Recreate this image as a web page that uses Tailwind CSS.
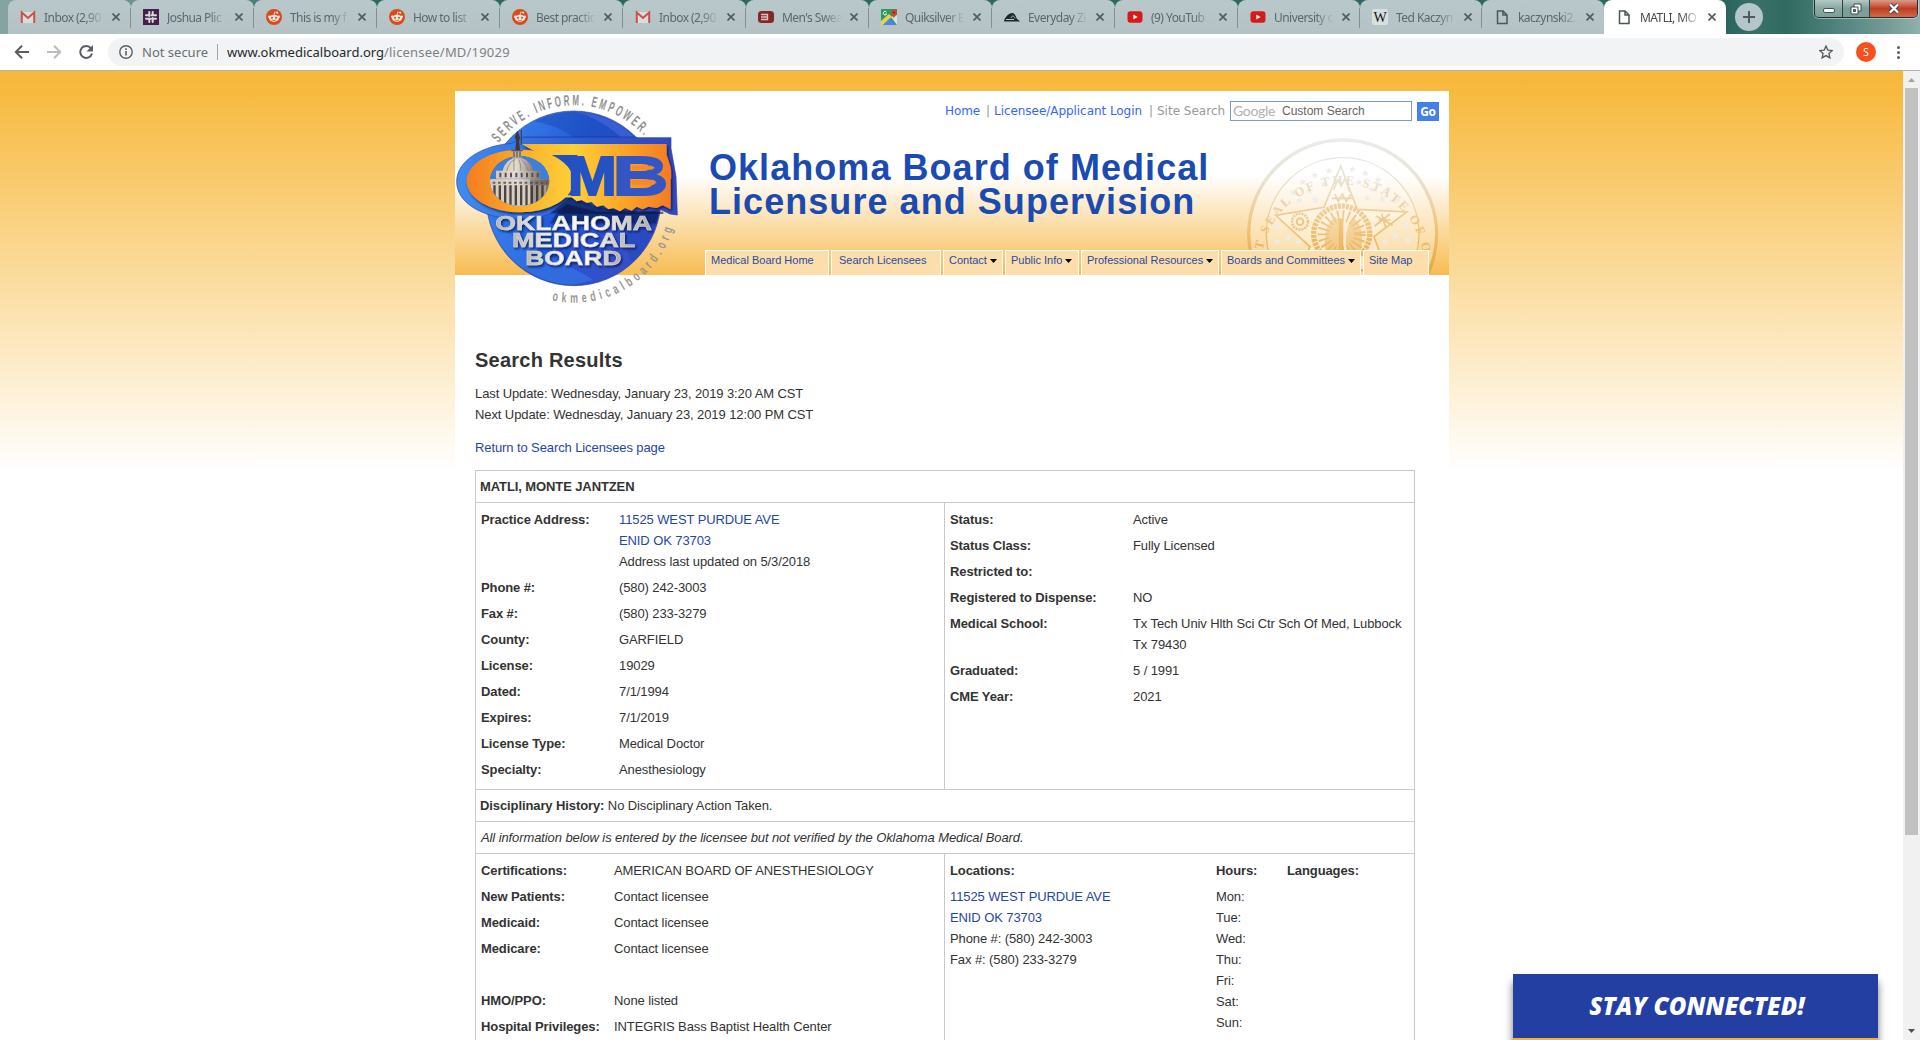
<!DOCTYPE html>
<html lang="en">
<head>
<meta charset="utf-8">
<title>MATLI, MONTE JANTZEN</title>
<script src="https://cdn.jsdelivr.net/npm/@tailwindcss/browser@4"></script>
</head>
<body class="flex h-[1040px] w-[1920px] flex-col overflow-hidden bg-white font-['Liberation_Sans',Arial,sans-serif] text-[13px] leading-[21px] text-[#333]">

<!-- icon symbols for the tab strip -->
<svg class="hidden">
  <symbol id="gmail" viewBox="0 0 16 16"><path d="M1 3h14v11H1z" fill="#d9dcdc"/><path d="M1.800 14V3.400L8 9l6.200-5.600V14" fill="none" stroke="#c8524a" stroke-width="2"/></symbol>
  <symbol id="slack" viewBox="0 0 16 16"><path d="M0 0h16v16H0z" fill="#46204a"/><path d="M6.300 3v4M3 6.300h2M9.700 6.300H13M9.700 3v2M6.300 9.700H3M6.300 11.500V13M9.700 9v4M11.500 9.700H13M6.300 9.700h1.500M8.500 6.300h1.200" stroke="#d5dcdc" stroke-width="2" stroke-linecap="round"/></symbol>
  <symbol id="reddit" viewBox="0 0 16 16"><circle cx="8" cy="8" r="8" fill="#dc4a1a"/><ellipse cx="8" cy="9.300" rx="5" ry="3.600" fill="#e8e4e0"/><circle cx="3.300" cy="7.700" r="1.300" fill="#e8e4e0"/><circle cx="12.700" cy="7.700" r="1.300" fill="#e8e4e0"/><circle cx="11.200" cy="3.700" r="1.100" fill="#e8e4e0"/><path d="M8 6l.7-3 2.300.6" fill="none" stroke="#e8e4e0" stroke-width=".8"/><circle cx="6" cy="8.700" r="1" fill="#dc4a1a"/><circle cx="10" cy="8.700" r="1" fill="#dc4a1a"/><path d="M6 11q2 1.200 4 0" fill="none" stroke="#dc4a1a" stroke-width=".7"/></symbol>
  <symbol id="menswear" viewBox="0 0 16 16"><rect y="2" width="16" height="12" rx="3.500" fill="#82282a"/><path d="M3 5.500h6.500v5H3M3 8h6" fill="none" stroke="#d8c4c4" stroke-width="1.400"/></symbol>
  <symbol id="maps" viewBox="0 0 16 16"><path d="M0 0h16v16H0z" fill="#2f9a5c"/><path d="M0 12l8-7 3 3-9 8H0z" fill="#e8d24a"/><path d="M10 8l6 8V6z" fill="#e2e2dc"/><path d="M2 16l7-7 6 7z" fill="#4a86e0"/><path d="M13 10c0-3-3-3.500-3-6.500a3 3 0 016 0c0 3-3 3.500-3 6.500z" fill="#c8483c"/><circle cx="13" cy="3.500" r="1.100" fill="#7c221c"/><path d="M5.500 3A1.800 1.800 0 105.700 5H4.300" fill="none" stroke="#fff" stroke-width="1"/></symbol>
  <symbol id="quik" viewBox="0 0 16 16"><path d="M0 12.500C.5 9 3.500 4.500 8.500 4c3 .5 3.500 4.500 4.500 6 1 .8 2 1.300 3 2.500z" fill="#1d2826"/><path d="M2 10.500h8M7 9C8 6 10 6.500 11 9.500" stroke="#b7c4c8" fill="none" stroke-width="1"/></symbol>
  <symbol id="yt" viewBox="0 0 16 16"><rect x=".5" y="2.300" width="15" height="11.400" rx="3" fill="#d41a1c"/><path d="M6.300 5.500l4.400 2.500-4.400 2.500z" fill="#eee"/></symbol>
  <symbol id="wiki" viewBox="0 0 16 16"><rect width="16" height="16" rx="2" fill="#d6e0e0"/><text x="8" y="12.500" font-size="14" text-anchor="middle" font-family="Liberation Serif" fill="#111">W</text></symbol>
  <symbol id="file" viewBox="0 0 16 16"><path d="M3.500 2h5.500l4 4v8.500H3.500zM9 2v4h4" fill="none" stroke="#4c5658" stroke-width="1.500"/></symbol>
</svg>

<!-- tab strip -->
<header class="relative flex h-[34px] shrink-0 bg-[linear-gradient(90deg,#86a5a2_0%,#6f9590_6%,#2c685f_20%,#2c685f_84%,#2b655d_90%,#3a7169_91.500%,#2f6a61_93%,#6f9893_98%,#8fb0ab_100%)] pl-2 font-['Noto_Sans','Open_Sans',sans-serif]">
  <div id="tabs" class="flex"></div>
  <div class="mt-[3px] ml-[9px] flex h-7 w-7 items-center justify-center rounded-full bg-[#b4c6c9]">
    <svg class="h-3 w-3" viewBox="0 0 12 12"><path d="M6 0v12M0 6h12" stroke="#4f5b5d" stroke-width="2"/></svg>
  </div>
  <div class="absolute top-0 right-[2px] flex h-[18px] w-[104px] overflow-hidden rounded-b-[5px] border border-t-0 border-[#22302f] shadow-[0_0_0_1px_#ffffff66]">
    <div class="flex w-7 items-end justify-center border-r border-[#33403f] bg-linear-to-b from-[#b4c9c5] via-[#8aa8a3] to-[#7b9e99] pb-1"><div class="h-[5px] w-[12px] rounded-xs border border-[#4a5554] bg-white"></div></div>
    <div class="flex w-[27px] items-center justify-center border-r border-[#33403f] bg-linear-to-b from-[#b4c9c5] via-[#7c9f99] to-[#7b9e99]">
      <svg class="h-3 w-3" viewBox="0 0 12 12"><path d="M4 1h7v7H4z" fill="#fff" stroke="#3f4a4c"/><path d="M1 4h7v7H1z" fill="#fff" stroke="#3f4a4c"/><path d="M3.500 6.500h2v2h-2z" fill="#6f8f8b" stroke="#3f4a4c"/></svg>
    </div>
    <div class="flex flex-1 items-center justify-center bg-linear-to-b from-[#d89a8a] via-[#c03c20] to-[#d0684a]">
      <svg class="h-[11px] w-3" viewBox="0 0 12 11"><path d="M2 1.500l8 8M10 1.500l-8 8" stroke="#3f4450" stroke-width="4.200"/><path d="M2 1.500l8 8M10 1.500l-8 8" stroke="#fff" stroke-width="2.400"/></svg>
    </div>
  </div>
</header>

<!-- toolbar -->
<div class="flex h-[37px] shrink-0 items-start border-b border-[#b2b4b8] bg-white pt-1 font-['Noto_Sans','Open_Sans',sans-serif] text-[13px]">
  <div class="flex h-7 w-[108px] items-center gap-4 pl-[14px]">
    <svg class="h-4 w-4" viewBox="0 0 16 16" fill="none" stroke="#5a5e63" stroke-width="2"><path d="M15 8H2.500M8 1.800L1.800 8 8 14.200"/></svg>
    <svg class="h-4 w-4" viewBox="0 0 16 16" fill="none" stroke="#babcbe" stroke-width="2"><path d="M1 8h12.500M8 1.800L14.200 8 8 14.200"/></svg>
    <svg class="h-4 w-4" viewBox="0 0 16 16"><path d="M13 4.300A6 6 0 1014 9.500" fill="none" stroke="#5a5e63" stroke-width="2"/><path d="M15 1v6.500H8.500z" fill="#5a5e63"/></svg>
  </div>
  <div class="flex h-7 w-[1736px] items-center rounded-full bg-[#f1f3f4] pr-[11px] pl-[11px] whitespace-nowrap">
    <svg class="h-[14px] w-[14px]" viewBox="0 0 14 14"><circle cx="7" cy="7" r="6.200" fill="none" stroke="#5a5e63" stroke-width="1.400"/><path d="M7 6v4.500M7 3.300v1.600" stroke="#5a5e63" stroke-width="1.600"/></svg>
    <span class="ml-[9px] w-[67px] text-[#6b6f74]">Not secure</span>
    <span class="ml-2 h-4 w-px bg-[#a0a3a7]"></span>
    <span class="ml-[9px] text-[#26282b]">www.okmedicalboard.org<span class="tracking-[0.2px] text-[#7d8186]">/licensee/MD/19029</span></span>
    <svg class="ml-auto h-[14px] w-[14px]" viewBox="0 0 14 14"><path d="M7 1l1.800 4.100 4.500.4-3.400 3 1 4.400L7 10.600 3.100 12.900l1-4.400-3.400-3 4.500-.4z" fill="none" stroke="#55595e" stroke-width="1.300"/></svg>
  </div>
  <div class="mt-1 ml-3 flex h-5 w-5 items-center justify-center rounded-full bg-[#f4511e] text-[10px] text-white">S</div>
  <div class="mt-2 ml-[21px] flex flex-col gap-[2px]"><i class="h-[3px] w-[3px] rounded-full bg-[#5a5e63]"></i><i class="h-[3px] w-[3px] rounded-full bg-[#5a5e63]"></i><i class="h-[3px] w-[3px] rounded-full bg-[#5a5e63]"></i></div>
</div>

<!-- page viewport -->
<div class="relative flex h-[969px]">
  <main class="h-[969px] w-[1903px] overflow-hidden bg-[linear-gradient(#f7b839_0px,#f7ba40_20px,#ffffff_400px)] pt-5 pl-[455px]">
    <div class="relative w-[994px] bg-white">
      <!-- banner -->
      <div class="relative flex h-[184px] flex-col bg-[linear-gradient(#ffffff_0px,#ffffff_84px,#f7bc52_184px)]">
        <svg class="absolute top-0 left-[625px] h-[184px] w-[369px]" viewBox="0 3 1107 552">
          <defs>
            <linearGradient id="sealInk" gradientUnits="userSpaceOnUse" x1="0" y1="145" x2="0" y2="555"><stop offset="0" stop-color="#ececec"/><stop offset=".3" stop-color="#e9e2d4"/><stop offset=".65" stop-color="#efc47c"/><stop offset="1" stop-color="#eba03a"/></linearGradient>
            <path id="sealArc" d="M548 480A244 244 0 011027 480"/>
            <path id="s5" d="M0-11L3-3.500 11-3.500 4.500 1.500 7 9.500 0 4.500-7 9.500-4.500 1.500-11-3.500-3-3.500z"/>
          </defs>
          <circle cx="788" cy="432" r="287" fill="#fff" fill-opacity=".25"/>
          <circle cx="788" cy="432" r="230" fill="#fff" fill-opacity=".2"/>
          <g fill="none" stroke="url(#sealInk)">
            <circle cx="788" cy="432" r="282" stroke-width="10"/>
            <circle cx="788" cy="432" r="229" stroke-width="4"/>
            <path d="M782 228L832 358 980 366 882 440 940 600 782 500 630 600 690 470 587 376 732 352z" stroke-width="5" fill="#fff" fill-opacity=".25"/>
            <circle cx="785" cy="432" r="84" stroke-width="16" stroke-dasharray="9 3"/>
            <circle cx="785" cy="432" r="54" stroke-width="36" stroke-dasharray="5 10"/>
            <circle cx="660" cy="395" r="24" stroke-width="8" stroke-dasharray="6 3"/>
            <circle cx="660" cy="395" r="10" stroke-width="6"/>
            <path d="M888 378l50 28M884 408l46-36M896 390h36M905 372l12 40M760 300l14-30 10 18 12-24 12 40M755 325h62M765 312l10 22 12-22 12 22 14-22" stroke-width="5"/>
          </g>
          <g fill="url(#sealInk)">
            <path d="M735 480q-6-60 18-88l12-12 14 14q8 16 4 86zM800 480q-8-50 10-84l14-10 12 14q16 30 8 80z" fill-opacity=".6"/>
            <path d="M776 385h14v100h-14z"/>
          </g>
          <g fill="url(#sealInk)">
            <use href="#s5" x="747" y="242"/><use href="#s5" x="704" y="256"/><use href="#s5" x="668" y="276"/><use href="#s5" x="732" y="283"/><use href="#s5" x="688" y="303"/><use href="#s5" x="640" y="308"/><use href="#s5" x="658" y="331"/><use href="#s5" x="613" y="341"/><use href="#s5" x="706" y="330"/>
            <use href="#s5" x="817" y="238"/><use href="#s5" x="856" y="250"/><use href="#s5" x="894" y="270"/><use href="#s5" x="836" y="277"/><use href="#s5" x="875" y="298"/><use href="#s5" x="925" y="297"/><use href="#s5" x="907" y="327"/><use href="#s5" x="951" y="332"/><use href="#s5" x="862" y="325"/>
            <use href="#s5" x="593" y="410"/><use href="#s5" x="592" y="454"/><use href="#s5" x="625" y="443"/><use href="#s5" x="655" y="455"/><use href="#s5" x="980" y="404"/><use href="#s5" x="946" y="438"/><use href="#s5" x="984" y="450"/><use href="#s5" x="915" y="453"/>
          </g>
          <text font-family="Liberation Serif" font-weight="700" font-size="38" fill="url(#sealInk)"><textPath href="#sealArc" textLength="822" lengthAdjust="spacing">T SEAL OF THE STATE OF OKLAH</textPath></text>
        </svg>
        <div class="flex h-[20px] items-center self-end pr-[10px] mt-[10px] font-['DejaVu_Sans',Verdana,sans-serif] text-[12px] whitespace-nowrap">
          <span class="w-[41px] tracking-[-0.1px] text-[#3366ff]">Home</span><span class="w-2 text-[#999]">|</span>
          <span class="w-[155px] tracking-[-0.05px] text-[#3366ff]">Licensee/Applicant Login</span><span class="w-2 text-[#999]">|</span>
          <span class="w-[73px] text-[#999]">Site Search</span>
          <span class="flex h-5 w-[182px] items-center border border-[#7e9db9] bg-white pl-[2px] font-['Liberation_Sans',sans-serif]"><span class="w-[49px] font-[Lato,sans-serif] text-[14px] leading-[18px] tracking-[-0.3px] text-[#b0b0b0]">Google</span><span class="text-[12px] text-[#666]">Custom Search</span></span>
          <span class="ml-[5px] flex h-[19px] w-[22px] items-center justify-center bg-[#4480ea] font-['Noto_Sans',sans-serif] text-[12px] font-bold tracking-[-0.3px] text-white">Go</span>
        </div>
        <h1 class="mt-[30px] ml-[254px] text-[36px] leading-[34px] font-bold tracking-[1.050px] whitespace-nowrap text-[#1b4bb0]">Oklahoma Board of Medical<br>Licensure and Supervision</h1>
        <nav class="mt-auto ml-[250px] flex h-[25px] gap-[2px] text-[11px] leading-[18px] whitespace-nowrap text-[#2c4a9e] *:relative *:border *:border-b-0 *:border-white *:bg-[#fbdeab] *:pl-[5px]">
          <a class="w-[124px]">Medical Board Home</a>
          <a class="w-[110px] pl-[7px]!">Search Licensees</a>
          <a class="flex w-[60px] items-start gap-[3px]">Contact<svg class="mt-[8px] h-1 w-[7px]" viewBox="0 0 7 4"><path d="M0 0h7L3.500 4z"/></svg></a>
          <a class="flex w-[74px] items-start gap-[3px]">Public Info<svg class="mt-[8px] h-1 w-[7px]" viewBox="0 0 7 4"><path d="M0 0h7L3.500 4z"/></svg></a>
          <a class="flex w-[138px] items-start gap-[3px]">Professional Resources<svg class="mt-[8px] h-1 w-[7px]" viewBox="0 0 7 4"><path d="M0 0h7L3.500 4z"/></svg></a>
          <a class="flex w-[140px] items-start gap-[3px]">Boards and Committees<svg class="mt-[8px] h-1 w-[7px]" viewBox="0 0 7 4"><path d="M0 0h7L3.500 4z"/></svg></a>
          <a class="w-[66px]">Site Map</a>
        </nav>
      </div>

      <!-- board logo -->
      <svg class="absolute top-[-11px] left-[-15px] h-[240px] w-[280px]" viewBox="0 0 840 720">
        <defs>
          <linearGradient id="ball" x1="0" x2="1" y1=".2" y2=".6"><stop offset="0" stop-color="#3a86ee"/><stop offset=".5" stop-color="#2258d4"/><stop offset="1" stop-color="#3a4cc8"/></linearGradient>
          <linearGradient id="edge" x1="0" x2="1"><stop offset="0" stop-color="#3f8cf0"/><stop offset=".6" stop-color="#2a5ad2"/><stop offset="1" stop-color="#3348bc"/></linearGradient>
          <linearGradient id="gold" gradientUnits="userSpaceOnUse" x1="80" y1="0" x2="695" y2="0"><stop offset="0" stop-color="#f47c20"/><stop offset=".3" stop-color="#fbb32c"/><stop offset=".52" stop-color="#fdd038"/><stop offset=".75" stop-color="#fba828"/><stop offset="1" stop-color="#f47a24"/></linearGradient>
          <linearGradient id="silver" x1="0" x2="1"><stop offset="0" stop-color="#b4b4b4"/><stop offset=".3" stop-color="#efefef"/><stop offset=".65" stop-color="#fafafa"/><stop offset="1" stop-color="#a9a9a9"/></linearGradient>
          <linearGradient id="stone" x1="0" x2="1"><stop offset="0" stop-color="#d5c6b6"/><stop offset=".45" stop-color="#e4dcd2"/><stop offset="1" stop-color="#85796e"/></linearGradient>
          <clipPath id="hole"><ellipse cx="239" cy="303" rx="89" ry="75"/></clipPath>
          <clipPath id="disc"><circle cx="401" cy="355" r="259"/></clipPath>
          <path id="topArc" d="M176 189A284 284 0 01687 360"/>
          <path id="lowArc" d="M336 661A308 308 0 00706 413"/>
          <filter id="sh" x="-10%" y="-20%" width="125%" height="150%"><feDropShadow dx="4" dy="5" stdDeviation="3" flood-color="#04103c" flood-opacity=".8"/></filter>
        </defs>
        <circle cx="401" cy="355" r="262" fill="url(#ball)" stroke="#2a3f8c" stroke-width="2"/>
        <g clip-path="url(#disc)">
          <path d="M250 120C400 130 500 230 520 400L600 620 700 500V100L420 80z" fill="#1c47b8" fill-opacity=".5"/>
          <path d="M400 92C520 130 590 200 640 320L700 200 560 80z" fill="#4a68dd" fill-opacity=".6"/>
          <path d="M140 400C200 480 330 520 460 600L300 640 100 520z" fill="#3c80ee" fill-opacity=".5"/>
          <path d="M250 170H600V210H250zM380 350L690 400V430H330z" fill="#071444" fill-opacity=".4" filter="url(#sh)"/>
        </g>
        <path d="M50 305C50 240 130 196 215 190L250 172H593V173H693V205L708 290 712 405 690 402 660 388 600 398 470 395 380 372C340 405 290 418 235 418 120 414 50 365 50 305z" fill="url(#edge)" stroke="#2746a8" stroke-width="2"/>
        <path d="M390 352L470 380 540 392 670 395V402H480L330 400z" fill="#0a1240" fill-opacity=".6"/>
        <g filter="url(#sh)">
          <path d="M245 192H680V224L692 262V388L668 376 650 384 625 380 608 388 590 380 575 392 555 384 540 394 520 384 505 388 490 376 470 380 455 366 440 368 425 360 410 364 395 352 375 352 330 240z" fill="url(#gold)"/>
          <path fill-rule="evenodd" d="M80 303a160 94 0 10320 0a160 94 0 10-320 0zM150 303a89 75 0 10178 0a89 75 0 10-178 0z" fill="url(#gold)"/>
        </g>
        <path d="M335 225H412V346H383Q400 325 400 303 398 255 335 225z" fill="#2350bc"/>
        <text x="384" y="345" textLength="146" lengthAdjust="spacingAndGlyphs" font-weight="700" font-size="164" fill="#2452c2" stroke="#2452c2" stroke-width="6">M</text>
        <text x="518" y="345" textLength="166" lengthAdjust="spacingAndGlyphs" font-weight="700" font-size="164" fill="#3455c4" stroke="#3455c4" stroke-width="6">B</text>
        <path d="M575 257H635L645 263 635 269H575zM575 299H640L650 307 640 315H575z" fill="#f68a28"/>
        <path d="M668 283L694 268V298z" fill="#f47a24"/>
        <!-- capitol dome -->
        <g clip-path="url(#hole)">
          <path d="M148 225h182v160H148z" fill="#3d7fdd"/>
          <path d="M186 285Q190 238 232 232Q278 238 282 285z" fill="url(#stone)"/>
          <path d="M200 275Q206 245 226 238M222 278V238M243 278Q243 250 236 238M266 275Q258 248 244 238" fill="none" stroke="#8c8078" stroke-width="2.500"/>
          <path d="M168 272H300V296H168z" fill="url(#stone)"/>
          <path d="M178 285H298" stroke="#57504e" stroke-width="14" stroke-dasharray="6 10"/>
          <path d="M148 298H330V390H148z" fill="#d9cec2"/>
          <path d="M160 345H322" stroke="#4b4444" stroke-width="62" stroke-dasharray="7 9"/>
          <path d="M154 298H326V316H154z" fill="url(#stone)"/>
          <path d="M158 308H322" stroke="#6a605c" stroke-width="6" stroke-dasharray="8 8"/>
          <path d="M270 298H330V390H270z" fill="#3b302c" fill-opacity=".35"/>
        </g>
        <path d="M218 236V212H244V236z" fill="#b8ada0"/><path d="M214 212H248M222 232V214M231 232V214M240 232V214" stroke="#4c4442" stroke-width="3"/>
        <path d="M226 210L229 182 224 172 232 152 240 172 237 184 240 210z" fill="#3f3532"/><path d="M244 150V195" stroke="#443a36" stroke-width="3"/>
        <g font-weight="700" fill="url(#silver)" filter="url(#sh)" stroke="#d8d8d8" stroke-width="1.500">
          <text x="166" y="450" font-size="60" textLength="470" lengthAdjust="spacingAndGlyphs">OKLAHOMA</text>
          <text x="216" y="502" font-size="60" textLength="370" lengthAdjust="spacingAndGlyphs">MEDICAL</text>
          <text x="256" y="555" font-size="60" textLength="288" lengthAdjust="spacingAndGlyphs">BOARD</text>
        </g>
        <text font-family="Liberation Sans" font-weight="700" font-size="45" letter-spacing="14" fill="#8f8f8f"><textPath href="#topArc" textLength="504" lengthAdjust="spacingAndGlyphs">SERVE. INFORM. EMPOWER.</textPath></text>
        <text font-family="Liberation Sans" font-weight="700" font-size="42" letter-spacing="20" fill="#9a9690"><textPath href="#lowArc" textLength="476" lengthAdjust="spacingAndGlyphs">okmedicalboard.org</textPath></text>
      </svg>

      <!-- content -->
      <section class="px-5 pt-[74px] tracking-[-0.1px] whitespace-nowrap">
        <h2 class="text-[20px] leading-[23px] font-bold tracking-[0.230px]">Search Results</h2>
        <p class="mt-[11px]">Last Update: Wednesday, January 23, 2019 3:20 AM CST<br>Next Update: Wednesday, January 23, 2019 12:00 PM CST</p>
        <p class="mt-3"><a class="text-[#1f46a8]">Return to Search Licensees page</a></p>

        <div class="mt-3 w-[940px] border border-[#c8c8c8]">
          <div class="h-[31px] px-1 pt-[5px] font-bold">MATLI, MONTE JANTZEN</div>
          <div class="grid h-[287px] grid-cols-[468px_1fr] border-t border-[#c8c8c8]">
            <dl class="grid auto-rows-min grid-cols-[138px_1fr] gap-y-[5px] py-[6px] pl-[5px] [&>dt]:font-bold">
              <dt>Practice Address:</dt><dd><a class="text-[#1f46a8]">11525 WEST PURDUE AVE<br>ENID OK 73703</a><br>Address last updated on 5/3/2018</dd>
              <dt>Phone #:</dt><dd>(580) 242-3003</dd>
              <dt>Fax #:</dt><dd>(580) 233-3279</dd>
              <dt>County:</dt><dd>GARFIELD</dd>
              <dt>License:</dt><dd>19029</dd>
              <dt>Dated:</dt><dd>7/1/1994</dd>
              <dt>Expires:</dt><dd>7/1/2019</dd>
              <dt>License Type:</dt><dd>Medical Doctor</dd>
              <dt>Specialty:</dt><dd>Anesthesiology</dd>
            </dl>
            <dl class="grid auto-rows-min grid-cols-[183px_1fr] gap-y-[5px] border-l border-[#c8c8c8] py-[6px] pl-[5px] [&>dt]:font-bold">
              <dt>Status:</dt><dd>Active</dd>
              <dt>Status Class:</dt><dd>Fully Licensed</dd>
              <dt>Restricted to:</dt><dd></dd>
              <dt>Registered to Dispense:</dt><dd>NO</dd>
              <dt>Medical School:</dt><dd>Tx Tech Univ Hlth Sci Ctr Sch Of Med, Lubbock<br>Tx 79430</dd>
              <dt>Graduated:</dt><dd>5 / 1991</dd>
              <dt>CME Year:</dt><dd>2021</dd>
            </dl>
          </div>
          <div class="h-8 border-t border-[#c8c8c8] px-1 pt-[5px]"><b>Disciplinary History:</b> No Disciplinary Action Taken.</div>
          <div class="h-8 border-t border-[#c8c8c8] px-[5px] pt-[5px] italic">All information below is entered by the licensee but not verified by the Oklahoma Medical Board.</div>
          <div class="grid h-[230px] grid-cols-[468px_1fr] border-t border-[#c8c8c8]">
            <dl class="grid auto-rows-[21px] grid-cols-[133px_1fr] gap-y-[5px] py-[6px] pl-[5px] [&>dt]:font-bold">
              <dt>Certifications:</dt><dd>AMERICAN BOARD OF ANESTHESIOLOGY</dd>
              <dt>New Patients:</dt><dd>Contact licensee</dd>
              <dt>Medicaid:</dt><dd>Contact licensee</dd>
              <dt>Medicare:</dt><dd>Contact licensee</dd>
              <dt></dt><dd></dd>
              <dt>HMO/PPO:</dt><dd>None listed</dd>
              <dt>Hospital Privileges:</dt><dd>INTEGRIS Bass Baptist Health Center</dd>
            </dl>
            <div class="grid auto-rows-min grid-cols-[266px_71px_1fr] gap-y-[5px] border-l border-[#c8c8c8] py-[6px] pl-[5px]">
              <b>Locations:</b><b>Hours:</b><b>Languages:</b>
              <div><a class="text-[#1f46a8]">11525 WEST PURDUE AVE<br>ENID OK 73703</a><br>Phone #: (580) 242-3003<br>Fax #: (580) 233-3279</div>
              <div>Mon:<br>Tue:<br>Wed:<br>Thu:<br>Fri:<br>Sat:<br>Sun:</div>
            </div>
          </div>
        </div>
      </section>
    </div>
  </main>

  <!-- scrollbar -->
  <div class="flex w-[17px] flex-col items-center bg-[#f1f1f1]">
    <svg class="mt-[7px] h-1 w-[7px]" viewBox="0 0 7 4"><path d="M0 4h7L3.500 0z" fill="#a3a3a3"/></svg>
    <div class="mt-[6px] h-[747px] w-[13px] bg-[#c1c1c1]"></div>
    <svg class="mt-auto mb-[7px] h-1 w-[7px]" viewBox="0 0 7 4"><path d="M0 0h7L3.500 4z" fill="#505050"/></svg>
  </div>

  <!-- sticky call to action -->
  <div class="absolute top-[903px] left-[1513px] h-[90px] w-[365px] bg-[#f2b035] shadow-[0_8px_8px_rgba(0,0,0,0.550)]">
    <div class="h-16 bg-[#233fa2] pl-[3px] text-center font-['Open_Sans',sans-serif] text-[24px] leading-[63px] font-extrabold tracking-[0.150px] whitespace-nowrap text-white italic">STAY CONNECTED!</div>
  </div>
</div>

<script>
  const tabs = [
    ['gmail', 'Inbox (2,90'], ['slack', 'Joshua Plic'], ['reddit', 'This is my f'], ['reddit', 'How to list'],
    ['reddit', 'Best practic'], ['gmail', 'Inbox (2,90'], ['menswear', "Men's Swea"], ['maps', 'Quiksilver E'],
    ['quik', 'Everyday Zi'], ['yt', '(9) YouTub'], ['yt', 'University o'], ['wiki', 'Ted Kaczyn'], ['file', 'kaczynski2.'], ['file', 'MATLI, MO']
  ];
  document.getElementById('tabs').innerHTML = tabs.map(([icon, title], i) => {
    const on = i === tabs.length - 1;
    const width = i < 10 ? 'w-[123px]' : 'w-[122px]';
    const shade = on ? 'bg-white text-[#45494d]' : 'bg-linear-to-b from-[#b9c8cb] to-[#b4c2c6] text-[#5b686c]';
    const line = on || i === tabs.length - 2 ? '' : '<i class="absolute right-0 top-2 h-5 w-px bg-[#7f9092]"></i>';
    return `<div class="relative flex h-[34px] ${width} items-center rounded-t-lg ${shade} pl-3"><svg class="h-4 w-4 shrink-0"><use href="#${icon}"/></svg>
      <span class="ml-2 w-[60px] overflow-hidden text-[12px] tracking-[-0.550px] whitespace-nowrap [mask-image:linear-gradient(90deg,#000_70%,transparent)]">${title}</span>
      <svg class="ml-2 h-2 w-2" viewBox="0 0 8 8"><path d="M.5.5l7 7M7.500.5l-7 7" stroke="#4f5b5e" stroke-width="1.600"/></svg>${line}</div>`;
  }).join('');
</script>
</body>
</html>
